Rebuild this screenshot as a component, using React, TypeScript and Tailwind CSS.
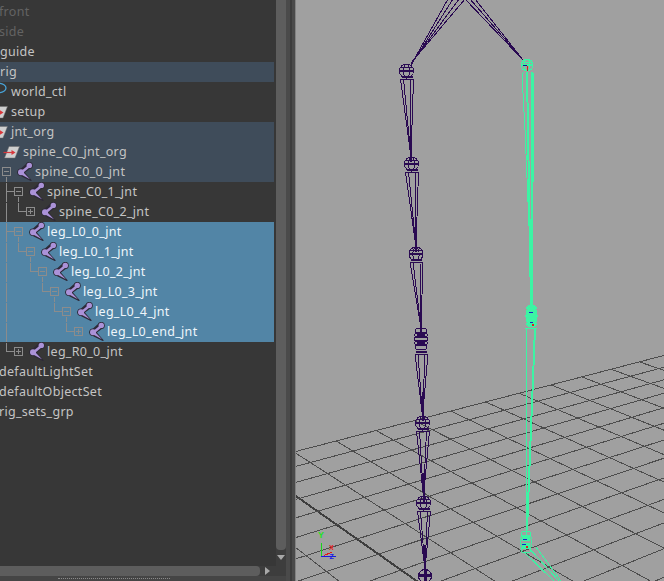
import React from "react";

type Row = {
  label: string;
  iconX?: number;
  textX: number;
  icon?: "joint" | "group" | "curve";
  tone?: "dim" | "normal";
  bg?: "hl" | "sel";
  guide?: React.ReactNode;
};

const G = "#8c8c8c";

function Box({ x, plus }: { x: number; plus?: boolean }) {
  return (
    <g>
      <rect x={x + 0.5} y={5.5} width={8} height={8} fill="none" stroke={G} />
      <line x1={x + 2} y1={9.5} x2={x + 7} y2={9.5} stroke={G} />
      {plus && <line x1={x + 4.5} y1={7} x2={x + 4.5} y2={12} stroke={G} />}
    </g>
  );
}

function L({ a, b, c, d }: { a: number; b: number; c: number; d: number }) {
  return <line x1={a + 0.5} y1={b + 0.5} x2={c + 0.5} y2={d + 0.5} stroke={G} />;
}

function Guide({ boxX, plus, parents, down, top }: { boxX: number; plus?: boolean; parents: number[]; down?: boolean; top?: boolean }) {
  const px = boxX - 8;
  return (
    <svg className="absolute left-0 top-0" width="110" height="20" shapeRendering="crispEdges">
      {parents.map((p) => (
        <L key={p} a={p} b={0} c={p} d={20} />
      ))}
      {top && <L a={px} b={0} c={px} d={9} />}
      {top && <L a={px} b={9} c={boxX} d={9} />}
      {down && <L a={boxX + 4} b={14} c={boxX + 4} d={20} />}
      <Box x={boxX} plus={plus} />
    </svg>
  );
}

const rows: Row[] = [
  { label: "front", textX: -1, tone: "dim" },
  { label: "side", textX: -1, tone: "dim" },
  { label: "guide", textX: 0 },
  { label: "rig", textX: 0, bg: "hl" },
  { label: "world_ctl", iconX: -7, textX: 11, icon: "curve" },
  { label: "setup", iconX: -9, textX: 11, icon: "group" },
  { label: "jnt_org", iconX: -9, textX: 11, icon: "group", bg: "hl" },
  { label: "spine_C0_jnt_org", iconX: 3, textX: 23, icon: "group", bg: "hl" },
  { label: "spine_C0_0_jnt", iconX: 17, textX: 35, icon: "joint", bg: "hl", guide: <Guide boxX={2} parents={[]} down /> },
  { label: "spine_C0_1_jnt", iconX: 29, textX: 47, icon: "joint", guide: <Guide boxX={14} parents={[6]} top down /> },
  { label: "spine_C0_2_jnt", iconX: 41, textX: 59, icon: "joint", guide: <Guide boxX={26} plus parents={[6]} top /> },
  { label: "leg_L0_0_jnt", iconX: 29, textX: 47, icon: "joint", bg: "sel", guide: <Guide boxX={14} parents={[6]} top down /> },
  { label: "leg_L0_1_jnt", iconX: 41, textX: 59, icon: "joint", bg: "sel", guide: <Guide boxX={26} parents={[6]} top down /> },
  { label: "leg_L0_2_jnt", iconX: 53, textX: 71, icon: "joint", bg: "sel", guide: <Guide boxX={38} parents={[6]} top down /> },
  { label: "leg_L0_3_jnt", iconX: 65, textX: 83, icon: "joint", bg: "sel", guide: <Guide boxX={50} parents={[6]} top down /> },
  { label: "leg_L0_4_jnt", iconX: 77, textX: 95, icon: "joint", bg: "sel", guide: <Guide boxX={62} parents={[6]} top down /> },
  { label: "leg_L0_end_jnt", iconX: 89, textX: 107, icon: "joint", bg: "sel", guide: <Guide boxX={74} plus parents={[6]} top /> },
  { label: "leg_R0_0_jnt", iconX: 29, textX: 47, icon: "joint", guide: <Guide boxX={14} plus parents={[]} top /> },
  { label: "defaultLightSet", textX: -1 },
  { label: "defaultObjectSet", textX: -1 },
  { label: "rig_sets_grp", textX: -1 },
];

function JointIcon() {
  const shape = "M10.5 1.5 L14.5 5 L7 10.5 L14 18.5 L5 14 L1 10 Z";
  return (
    <svg width="16" height="20" viewBox="0 0 16 20" className="block">
      <path d={shape} fill="#2e2a38" stroke="#2e2a38" strokeWidth="1.2" strokeLinejoin="round" />
      <circle cx="12.3" cy="3.4" r="3.5" fill="#2e2a38" />
      <circle cx="4" cy="10.2" r="3.8" fill="#2e2a38" />
      <path d="M11.5 3 L13 5 L6.5 10.5 L13 17.2 L5 13 L3 10 Z" fill="#ab92d8" />
      <circle cx="12.3" cy="3.4" r="2.7" fill="#ab92d8" />
      <circle cx="4" cy="10.2" r="3" fill="#ab92d8" />
    </svg>
  );
}

function GroupIcon() {
  return (
    <svg width="17" height="20" viewBox="0 0 17 20" className="block">
      <path d="M6 4.5 H16.5 L12 16 H1.5 Z" fill="#cfcfcf" stroke="#6a6a6a" strokeWidth="0.5" />
      <path d="M0.5 10.5 H11" stroke="#d8383c" strokeWidth="1.2" />
      <path d="M8.5 8 L12.5 10.5 L8.5 13 Z" fill="#d8383c" />
    </svg>
  );
}

function CurveIcon() {
  return (
    <svg width="14" height="20" viewBox="0 0 14 20" className="block">
      <ellipse cx="6" cy="6" rx="7" ry="4.6" fill="none" stroke="#48a3d8" strokeWidth="1.3" />
    </svg>
  );
}

function Outliner() {
  return (
    <div className="min-w-0 flex-1 overflow-hidden bg-[#373737] pr-[2px] pt-[2px]">
      {rows.map((r) => {
        const first = r.icon ? r.iconX! : r.textX;
        const iconW = r.icon ? r.textX - r.iconX! : 0;
        return (
          <div
            key={r.label}
            className={
              "relative flex h-5 items-center whitespace-nowrap " +
              (r.bg === "hl" ? "bg-[#3f4c5a]" : r.bg === "sel" ? "bg-[#5285a6]" : "")
            }
          >
            {r.guide}
            <div className="flex shrink-0 items-center" style={{ marginLeft: first }}>
              {r.icon && (
                <div className="shrink-0" style={{ width: iconW }}>
                  {r.icon === "joint" ? <JointIcon /> : r.icon === "group" ? <GroupIcon /> : <CurveIcon />}
                </div>
              )}
              <span
                className={
                  "text-[12.5px] leading-[18px] tracking-[0.3px] " +
                  (r.tone === "dim" ? "text-[#636363]" : r.bg === "sel" ? "text-[#eef6fb]" : "text-[#c4c4c4]")
                }
              >
                {r.label}
              </span>
            </div>
          </div>
        );
      })}
    </div>
  );
}

/* perspective floor fitted to the reference */
const VP1 = [5200, -1022];
const VP2 = [-2118, -1022];
const A = 0.02425;
const B = -0.0222;
const P00 = [120, 303];
function proj(u: number, v: number): [number, number] {
  const w = A * u + B * v + 1;
  const x = (A * u * VP1[0] + B * v * VP2[0] + P00[0]) / w;
  const y = (A * u * VP1[1] + B * v * VP2[1] + P00[1]) / w;
  return [x / 3, 340 + y / 3];
}

function Floor() {
  const items: React.ReactNode[] = [];
  for (let u = -8; u <= 22; u++) {
    const a = proj(u, 0);
    const b = proj(u, 24);
    items.push(
      <line key={"u" + u} x1={a[0]} y1={a[1]} x2={b[0]} y2={b[1]} stroke={u === -2 ? "#3e3e3e" : "#4d4d4d"} strokeWidth={u === -2 ? 2 : 1} />,
    );
  }
  for (let v = 0; v <= 24; v++) {
    const a = proj(-8, v);
    const b = proj(22, v);
    items.push(<line key={"v" + v} x1={a[0]} y1={a[1]} x2={b[0]} y2={b[1]} stroke="#4d4d4d" />);
  }
  return <g>{items}</g>;
}

const PURPLE = "#2a0a52";
const GREEN = "#3cf4a4";
const OX = 296;

function Joint({ x, y, r = 7, c }: { x: number; y: number; r?: number; c: string }) {
  const X = x - OX;
  return (
    <g stroke={c} fill="none">
      <circle cx={X} cy={y} r={r} />
      <ellipse cx={X} cy={y} rx={r * 0.45} ry={r} />
      <line x1={X - r} y1={y} x2={X + r} y2={y} strokeWidth="2" />
      <line x1={X - r + 1} y1={y - r / 2} x2={X + r - 1} y2={y - r / 2} />
    </g>
  );
}

function Bone({ x, y, w = 6.5, tx, ty, c, tip = 24 }: { x: number; y: number; w?: number; tx: number; ty: number; c: string; tip?: number }) {
  const X = x - OX;
  const T = tx - OX;
  return (
    <g stroke={c} fill="none">
      <line x1={X - w + 1} y1={y} x2={X + w - 1} y2={y} strokeWidth="2" />
      <line x1={X - w} y1={y + 2} x2={X + w} y2={y + 2} />
      <line x1={X - w} y1={y + 2} x2={T} y2={ty} />
      <line x1={X - w + 3} y1={y + 2} x2={T} y2={ty} />
      <line x1={X + w - 3} y1={y + 2} x2={T} y2={ty} />
      <line x1={X + w} y1={y + 2} x2={T} y2={ty} />
      {tip > 0 && <line x1={T} y1={ty - tip} x2={T} y2={ty + 5} strokeWidth="2" />}
    </g>
  );
}

function Cluster({ x, y, c, rx = 7, filled }: { x: number; y: number; c: string; rx?: number; filled?: boolean }) {
  const X = x - OX;
  return (
    <g stroke={c} fill={filled ? c : "none"}>
      {[-8, -4, 0, 4, 8].map((d) => (
        <ellipse key={d} cx={X} cy={y + d} rx={rx - Math.abs(d) / 8} ry={3} />
      ))}
      {!filled && <line x1={X - 4} y1={y - 3} x2={X + 4} y2={y - 3} strokeWidth="4" />}
      {!filled && <line x1={X - 4} y1={y + 3} x2={X + 4} y2={y + 3} strokeWidth="3" />}
    </g>
  );
}

function Skeleton() {
  const hip = ([[448, 411, 65], [453, 411, 65], [459, 411, 64], [465, 411, 63], [465, 523, 60], [470, 523, 60], [475, 523, 60]] as number[][]);
  return (
    <g>
      {hip.map((h, i) => (
        <line key={i} x1={h[0] - OX} y1={-1} x2={h[1] - OX} y2={h[2]} stroke={PURPLE} />
      ))}
      <Joint x={406.5} y={71} c={PURPLE} />
      <Bone x={407} y={77} tx={411} ty={157} c={PURPLE} />
      <Joint x={411.5} y={164} c={PURPLE} />
      <Bone x={412} y={170} tx={416} ty={247} c={PURPLE} />
      <Joint x={416} y={254} c={PURPLE} />
      <Bone x={416.5} y={260} tx={421} ty={328} c={PURPLE} />
      <Cluster x={421} y={339} c={PURPLE} />
      <Bone x={421.5} y={352} tx={422.5} ty={416} c={PURPLE} />
      <Joint x={422.5} y={423} c={PURPLE} />
      <Bone x={423} y={429} tx={423.5} ty={497} c={PURPLE} />
      <Joint x={423.5} y={503} c={PURPLE} />
      <Bone x={424} y={509} tx={425} ty={569} c={PURPLE} />
      <circle cx={425 - OX} cy={576} r={6.5} stroke={PURPLE} fill="none" />
      <line x1={419 - OX} y1={575} x2={431 - OX} y2={575} stroke={PURPLE} strokeWidth="3" />
      <line x1={425 - OX} y1={570} x2={425 - OX} y2={581} stroke={PURPLE} strokeWidth="3" />

      {/* selected leg */}
      <Joint x={527} y={65} r={6} c={GREEN} />
      <g stroke={GREEN} fill="none">
        <line x1={522 - OX} y1={74} x2={524 - OX} y2={72} />
        <line x1={532 - OX} y1={72} x2={534 - OX} y2={74} />
        <line x1={522 - OX} y1={74} x2={525 - OX} y2={130} />
        <line x1={525 - OX} y1={130} x2={530 - OX} y2={250} />
        <line x1={534 - OX} y1={74} x2={532.5 - OX} y2={240} />
        <line x1={527 - OX} y1={72} x2={531 - OX} y2={306} strokeWidth="2" />
        <line x1={531.5 - OX} y1={72} x2={531.5 - OX} y2={306} strokeWidth="2" />
        <line x1={527 - OX} y1={328} x2={526.5 - OX} y2={535} />
        <line x1={535 - OX} y1={328} x2={527 - OX} y2={530} strokeWidth="2" />
        <line x1={525 - OX} y1={328} x2={537 - OX} y2={328} />
        <line x1={529 - OX} y1={548} x2={559 - OX} y2={581} />
        <line x1={524 - OX} y1={552} x2={554 - OX} y2={581} />
        <line x1={536 - OX} y1={547} x2={561 - OX} y2={581} />
      </g>
      <Cluster x={531.5} y={316} c={GREEN} rx={6} filled />
      <Cluster x={526} y={542} c={GREEN} rx={6} />
      <line x1={523 - OX} y1={65} x2={527 - OX} y2={65} stroke="#10108a" />
      <line x1={527 - OX} y1={66} x2={527 - OX} y2={71} stroke="#d02020" />
      <line x1={529 - OX} y1={312} x2={533 - OX} y2={312} stroke="#1d1dc8" />
      <line x1={530 - OX} y1={322} x2={533 - OX} y2={322} stroke="#1d1dc8" />
      <rect x={532 - OX} y={324} width={2} height={2} fill="#e02020" />
      <line x1={523 - OX} y1={539} x2={527 - OX} y2={539} stroke="#1d1dc8" />
      <line x1={522 - OX} y1={544} x2={526 - OX} y2={544} stroke="#1d1dc8" />
      <rect x={526 - OX} y={546} width={2} height={2} fill="#e02020" />
    </g>
  );
}

function Axes() {
  return (
    <g fontFamily="'Liberation Sans', sans-serif" fontWeight="700" fontSize="8">
      <line x1={25.5} y1={543} x2={25.5} y2={557} stroke="#18d818" />
      <line x1={25} y1={556.5} x2={40} y2={556.5} stroke="#1818e0" />
      <line x1={28} y1={555.5} x2={36} y2={552} stroke="#e01818" />
      <text x={22} y={538} fontSize="9" fill="#22e022">Y</text>
      <text x={33} y={550} fontSize="7" fill="#e81818">X</text>
      <text x={33.5} y={558.5} fontSize="7" fill="#1818e8">Z</text>
    </g>
  );
}

export default function App() {
  return (
    <div className="flex h-[581px] w-[664px] overflow-hidden bg-[#4a4a4a] [font-family:'Noto_Sans',sans-serif]">
      <div className="flex h-full w-[286px] shrink-0 flex-col">
        <div className="flex min-h-0 flex-1">
          <Outliner />
          <div className="flex w-[10px] shrink-0 flex-col bg-[#3d3d3d]">
            <div className="h-[550px] rounded-b-[4px] bg-[#5d5d5d]" />
            <div className="mt-[5px] flex justify-center">
              <div className="h-0 w-0 border-x-[4px] border-t-[5px] border-x-transparent border-t-[#a8a8a8]" />
            </div>
          </div>
        </div>
        <div className="flex h-[10px] shrink-0 items-center bg-[#3d3d3d]">
          <div className="h-full w-[260px] rounded-r-[4px] bg-[#5d5d5d]" />
          <div className="ml-[5px] h-0 w-0 border-y-[4px] border-l-[5px] border-y-transparent border-l-[#a8a8a8]" />
        </div>
        <div className="flex h-[5px] shrink-0 items-center bg-[#454545] pl-[58px]">
          <div className="h-px w-[112px] border-t border-dotted border-[#8a8a8a]" />
        </div>
      </div>
      <div className="w-[4px] shrink-0 bg-[#4a4a4a]" />
      <div className="w-[2px] shrink-0 bg-[#3c3c3c]" />
      <div className="w-[3px] shrink-0 bg-[#4a4a4a]" />
      <div className="w-px shrink-0 bg-[#828282]" />
      <div className="h-full flex-1 bg-[#a0a0a0]">
        <svg width="368" height="581" viewBox="0 0 368 581" shapeRendering="crispEdges" className="block">
          <Floor />
          <Skeleton />
          <Axes />
        </svg>
      </div>
    </div>
  );
}
